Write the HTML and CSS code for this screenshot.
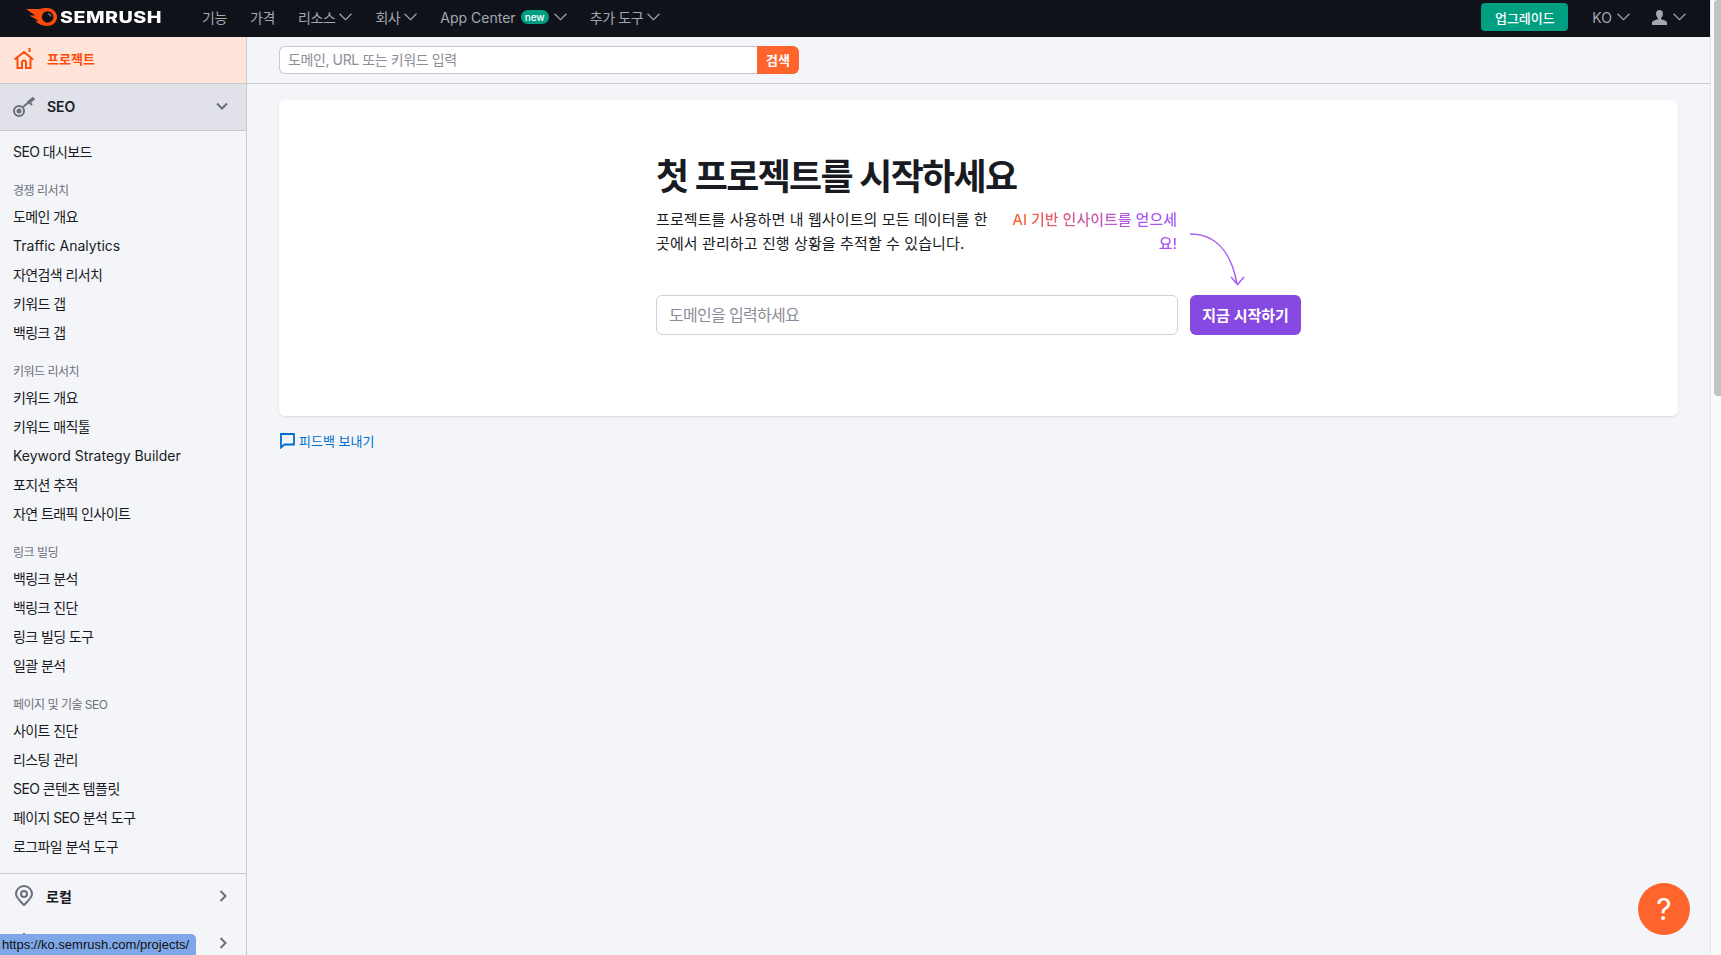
FILE: index.html
```html
<!DOCTYPE html>
<html lang="ko">
<head>
<meta charset="utf-8">
<title>프로젝트 - Semrush</title>
<link rel="stylesheet" href="styles.css">
</head>
<body>
<div class="page">
  <div class="window">
    <header class="topbar">
      <a class="logo">
        <svg class="logo-icon" width="31" height="18" viewBox="0 0 33 19">
          <path fill="#ff4c0d" d="M0 1h15C17 .4 19.500 0 22.500 0c6 0 10.500 4.300 10.500 9.500S28.500 19 22.500 19c-5.500 0-9.700-2-12.500-5.500h3.500L3.500 8h6.500Z"/>
          <circle cx="23" cy="9.500" r="6.200" fill="#0f1319"/>
          <path d="M23.500 6a3.500 3.500 0 0 1 3 3" fill="none" stroke="#8b8d98" stroke-width="1.200"/>
        </svg>
        <span class="logo-text">SEMRUSH</span>
      </a>
      <nav class="topnav">
        <a class="nav-link">기능</a>
        <a class="nav-link">가격</a>
        <a class="nav-link">리소스 <svg class="caret" viewBox="0 0 12 7"><path d="M.5.5 6 6l5.500-5.500"/></svg></a>
        <a class="nav-link">회사 <svg class="caret" viewBox="0 0 12 7"><path d="M.5.5 6 6l5.500-5.500"/></svg></a>
        <a class="nav-link latin">App Center <span class="badge-new">new</span> <svg class="caret" viewBox="0 0 12 7"><path d="M.5.5 6 6l5.500-5.500"/></svg></a>
        <a class="nav-link">추가 도구 <svg class="caret" viewBox="0 0 12 7"><path d="M.5.5 6 6l5.500-5.500"/></svg></a>
      </nav>
      <div class="topbar-right">
        <a class="btn-upgrade">업그레이드</a>
        <a class="nav-link latin lang">KO <svg class="caret" viewBox="0 0 12 7"><path d="M.5.5 6 6l5.500-5.500"/></svg></a>
        <a class="nav-link user">
          <svg class="user-icon" width="15" height="15" viewBox="0 0 15 15"><path fill="#a4a6b3" d="M7.500 0C9.700 0 11 1.600 11 3.800c0 1.800-.8 3.400-1.900 4.200v1.300c2.400.5 5.400 1.500 5.900 3.200V15H0v-2.500c.5-1.700 3.500-2.700 5.900-3.200V8C4.800 7.200 4 5.600 4 3.800 4 1.600 5.300 0 7.500 0Z"/></svg>
          <svg class="caret" viewBox="0 0 12 7"><path d="M.5.5 6 6l5.500-5.500"/></svg>
        </a>
      </div>
    </header>

    <div class="body-row">
      <aside class="sidebar">
        <a class="side-project">
          <svg class="side-icon" width="22" height="22" viewBox="0 0 22 22" fill="none" stroke="#ff4c0d" stroke-width="2"><path d="M1.500 11.500 11 4l9 7.500M4.500 10v10h4.500v-5.500a2 2 0 0 1 4 0V20h4.500V10"/><path d="M16.500 0v4"/></svg>
          <span>프로젝트</span>
        </a>
        <a class="side-group open">
          <svg class="side-icon" width="24" height="22" viewBox="0 0 24 22" fill="none" stroke="#6c6e79" stroke-width="2"><circle cx="6" cy="16" r="5"/><circle cx="6" cy="16" r="1.500" fill="#6c6e79"/><path d="m10 12 6-5"/><path d="m15 8 6-5" stroke-width="3.500"/><path d="m17 8 2 2" stroke-width="2"/></svg>
          <span class="side-group-name">SEO</span>
          <svg class="group-caret" width="12" height="8" viewBox="0 0 12 8"><path d="m1 1.500 5 5 5-5"/></svg>
        </a>
        <div class="side-menu">
          <a class="side-item first">SEO 대시보드</a>

          <div class="side-label">경쟁 리서치</div>
          <a class="side-item">도메인 개요</a>
          <a class="side-item latin">Traffic Analytics</a>
          <a class="side-item">자연검색 리서치</a>
          <a class="side-item">키워드 갭</a>
          <a class="side-item">백링크 갭</a>

          <div class="side-label">키워드 리서치</div>
          <a class="side-item">키워드 개요</a>
          <a class="side-item">키워드 매직툴</a>
          <a class="side-item latin">Keyword Strategy Builder</a>
          <a class="side-item">포지션 추적</a>
          <a class="side-item">자연 트래픽 인사이트</a>

          <div class="side-label">링크 빌딩</div>
          <a class="side-item">백링크 분석</a>
          <a class="side-item">백링크 진단</a>
          <a class="side-item">링크 빌딩 도구</a>
          <a class="side-item">일괄 분석</a>

          <div class="side-label">페이지 및 기술 SEO</div>
          <a class="side-item">사이트 진단</a>
          <a class="side-item">리스팅 관리</a>
          <a class="side-item">SEO 콘텐츠 템플릿</a>
          <a class="side-item">페이지 SEO 분석 도구</a>
          <a class="side-item">로그파일 분석 도구</a>
        </div>
        <a class="side-group closed">
          <svg class="side-icon" width="18" height="21" viewBox="0 0 18 21" fill="none" stroke="#6c6e79" stroke-width="2"><path d="M9 20C5 16 1 12.500 1 9a8 8 0 0 1 16 0c0 3.500-4 7-8 11Z"/><circle cx="9" cy="9" r="3"/></svg>
          <span class="side-group-name">로컬</span>
          <svg class="group-caret" width="8" height="12" viewBox="0 0 8 12"><path d="m1.500 1 5 5-5 5"/></svg>
        </a>
        <a class="side-group closed">
          <svg class="side-icon" width="18" height="21" viewBox="0 0 18 21" fill="none" stroke="#6c6e79" stroke-width="2"><path d="M9 1v4"/></svg>
          <span class="side-group-name"></span>
          <svg class="group-caret" width="8" height="12" viewBox="0 0 8 12"><path d="m1.500 1 5 5-5 5"/></svg>
        </a>
      </aside>

      <main class="content">
        <div class="search-row">
          <form class="search-form">
            <input class="search-input" type="text" placeholder="도메인, URL 또는 키워드 입력">
            <button class="search-btn" type="button">검색</button>
          </form>
        </div>
        <div class="content-inner">
          <section class="card">
            <div class="hero">
              <h1>첫 프로젝트를 시작하세요</h1>
              <div class="hero-copy">
                <p class="hero-text">프로젝트를 사용하면 내 웹사이트의 모든 데이터를 한 곳에서 관리하고 진행 상황을 추적할 수 있습니다.</p>
                <p class="hero-ai"><span class="ai-gradient">AI 기반 인사이트를 얻으세요!</span></p>
              </div>
              <div class="hero-form">
                <input class="domain-input" type="text" placeholder="도메인을 입력하세요">
                <button class="start-btn" type="button">지금 시작하기</button>
                <svg class="hero-arrow" width="58" height="58" viewBox="0 0 58 58" fill="none" stroke="#a760f5" stroke-width="1.500"><path d="M1 2c24 0 41 16 47 50"/><path d="m42 45 6.500 7.500L55 45"/></svg>
              </div>
            </div>
          </section>
          <a class="feedback">
            <svg width="15" height="16" viewBox="0 0 15 16" fill="none" stroke="#006dca" stroke-width="1.800"><path d="M1 1h13v10.500H4.500L1 14.500Z"/></svg>
            <span>피드백 보내기</span>
          </a>
        </div>
      </main>
    </div>
  </div>
  <div class="scrollbar"><div class="scrollbar-thumb"></div></div>
</div>

<a class="help-btn">?</a>
<div class="status-tip">https://ko.semrush.com/projects/</div>
</body>
</html>
```

FILE: styles.css
```css
:root {
  --color-dark: #0f1319;
  --color-bg: #f4f5f9;
  --color-line: #c9cad1;
  --color-text: #191b23;
  --color-muted: #6c6e79;
  --color-orange: #ff642d;
  --color-green: #009f81;
  --color-purple: #8649e1;
}
* {
  box-sizing: border-box;
}
html, body {
  margin: 0;
  height: 100%;
  overflow: hidden;
}
body {
  font-family: Inter, "Noto Sans CJK KR", sans-serif;
  font-size: 14px;
  color: var(--color-text);
  background: var(--color-bg);
}
a {
  color: inherit;
  text-decoration: none;
}
.page {
  display: flex;
  height: 955px;
}
.window {
  flex: 1;
  min-width: 0;
  display: flex;
  flex-direction: column;
}
.scrollbar {
  width: 11px;
  background: #fafafa;
  border-left: 1px solid #e6e6e6;
  padding-left: 3px;
}
.scrollbar-thumb {
  height: 396px;
  background: #c2c2c2;
  border-radius: 4px 0 0 4px;
}

/* top bar */
.topbar {
  height: 37px;
  flex: none;
  background: var(--color-dark);
  display: flex;
  align-items: center;
  padding: 0 0 3px 26px;
  color: #a4a6b3;
}
.logo {
  display: flex;
  align-items: center;
  gap: 3px;
  width: 176px;
}
.logo-text {
  color: #fff;
  font-weight: 800;
  font-size: 16px;
  letter-spacing: 0.4px;
  transform: scaleX(1.23);
  transform-origin: left center;
}
.topnav {
  display: flex;
  align-items: center;
  gap: 23px;
}
.nav-link {
  display: flex;
  align-items: center;
  gap: 4px;
  font-size: 14px;
  letter-spacing: -0.4px;
  white-space: nowrap;
}
.nav-link.latin {
  letter-spacing: 0;
}
.caret {
  width: 13px;
  height: 8px;
  fill: none;
  stroke: #a4a6b3;
  stroke-width: 1;
}
.badge-new {
  background: var(--color-green);
  color: #fff;
  font-size: 10px;
  line-height: 14px;
  padding: 0 4px;
  border-radius: 7px;
  font-weight: 500;
  margin: 0 1px;
}
.topbar-right {
  margin-left: auto;
  display: flex;
  align-items: center;
  padding-right: 24px;
}
.btn-upgrade {
  background: var(--color-green);
  color: #fff;
  font-size: 13px;
  font-weight: 500;
  height: 28px;
  width: 87px;
  display: flex;
  align-items: center;
  justify-content: center;
  border-radius: 4px;
  margin-right: 24px;
}
.lang {
  gap: 5px;
  margin-right: 22px;
}
.user {
  gap: 6px;
}

/* sidebar */
.body-row {
  flex: 1;
  min-height: 0;
  display: flex;
}
.sidebar {
  width: 247px;
  flex: none;
  border-right: 1px solid var(--color-line);
  overflow: hidden;
}
.side-project {
  height: 47px;
  background: #ffe4d9;
  border-bottom: 1px solid var(--color-line);
  color: #ff4c0d;
  font-weight: 600;
  font-size: 13px;
  display: flex;
  align-items: center;
  padding: 0 0 3px 13px;
}
.side-icon {
  flex: none;
  margin-right: 10px;
}
.side-project .side-icon {
  margin-right: 12px;
}
.side-group {
  height: 47px;
  display: flex;
  align-items: center;
  padding: 0 18px 2px 13px;
  font-weight: 600;
  font-size: 14px;
}
.side-group.open {
  background: #e0e1e9;
  border-bottom: 1px solid var(--color-line);
}
.side-group.closed {
  padding: 0 19px 4px 13px;
}
.side-group.closed .side-icon {
  margin-left: 2px;
  margin-right: 13px;
}
.side-group-name {
  flex: 1;
}
.group-caret {
  fill: none;
  stroke: var(--color-muted);
  stroke-width: 2;
}
.side-menu {
  height: 743px;
  padding: 6px 13px 0;
  border-bottom: 1px solid var(--color-line);
}
.side-item {
  display: block;
  height: 29px;
  line-height: 29px;
  font-size: 14px;
  letter-spacing: -0.6px;
  white-space: nowrap;
}
.side-item.latin {
  letter-spacing: 0;
}
.side-item.first {
  margin-bottom: 1px;
}
.side-label {
  font-size: 12px;
  line-height: 16px;
  color: var(--color-muted);
  letter-spacing: -0.5px;
  margin-top: 17px;
  margin-bottom: 3px;
}

/* content */
.content {
  flex: 1;
  min-width: 0;
  display: flex;
  flex-direction: column;
}
.search-row {
  height: 47px;
  flex: none;
  border-bottom: 1px solid var(--color-line);
  padding: 9px 0 0 32px;
}
.search-form {
  display: flex;
  width: 520px;
  height: 28px;
}
.search-input {
  flex: 1;
  min-width: 0;
  border: 1px solid var(--color-line);
  border-right: none;
  border-radius: 6px 0 0 6px;
  background: #fff;
  padding: 0 8px 2px;
  font: 14px Inter, "Noto Sans CJK KR", sans-serif;
  letter-spacing: -0.4px;
}
.search-input::placeholder,
.domain-input::placeholder {
  color: #8b8d98;
  opacity: 1;
}
.search-btn {
  width: 42px;
  border: none;
  background: var(--color-orange);
  color: #fff;
  font: 600 13px Inter, "Noto Sans CJK KR", sans-serif;
  border-radius: 0 6px 6px 0;
  padding: 0 0 2px;
}
.content-inner {
  padding: 16px 32px 0;
}
.card {
  background: #fff;
  height: 316px;
  border-radius: 6px;
  box-shadow: 0 1px 2px rgba(25, 27, 35, 0.12);
  display: flex;
  justify-content: center;
  padding-top: 52px;
}
.hero {
  width: 645px;
}
h1 {
  margin: 0;
  font-size: 36px;
  line-height: 50px;
  font-weight: 600;
  letter-spacing: -1.7px;
}
.hero-copy {
  display: flex;
  justify-content: space-between;
  margin-top: 6px;
  height: 87px;
}
.hero-copy p {
  margin: 0;
  font-size: 15px;
  line-height: 24px;
}
.hero-text {
  width: 344px;
  letter-spacing: 0.1px;
}
.hero-ai {
  width: 167px;
  margin-right: 124px !important;
  text-align: right;
  font-weight: 500;
}
.ai-gradient {
  background: linear-gradient(90deg, #ff642d 0%, #a855f7 70%, #a855f7 100%);
  -webkit-background-clip: text;
  background-clip: text;
  color: transparent;
}
.hero-form {
  position: relative;
  display: flex;
  gap: 12px;
  height: 40px;
}
.domain-input {
  width: 523px;
  height: 40px;
  border: 1px solid #d1d2d9;
  border-radius: 6px;
  padding: 0 12px;
  font: 16px Inter, "Noto Sans CJK KR", sans-serif;
  letter-spacing: -0.7px;
}
.start-btn {
  width: 111px;
  height: 40px;
  border: none;
  border-radius: 6px;
  background: var(--color-purple);
  color: #fff;
  font: 600 15px Inter, "Noto Sans CJK KR", sans-serif;
  padding: 0 0 2px;
}
.hero-arrow {
  position: absolute;
  left: 533px;
  top: -63px;
}
.feedback {
  display: inline-flex;
  align-items: center;
  gap: 4px;
  margin-top: 15px;
  margin-left: 1px;
  color: #006dca;
  font-size: 13px;
  line-height: 20px;
}

/* overlays */
.help-btn {
  position: fixed;
  left: 1638px;
  top: 883px;
  width: 52px;
  height: 52px;
  border-radius: 50%;
  background: var(--color-orange);
  color: #fff;
  font-size: 30px;
  font-weight: 400;
  line-height: 52px;
  text-align: center;
}
.status-tip {
  position: fixed;
  left: 0;
  top: 934px;
  width: 196px;
  height: 21px;
  background: #7da7e6;
  border-radius: 0 5px 0 0;
  color: #111;
  font-family: "Liberation Sans", Arial, sans-serif;
  font-size: 13px;
  line-height: 22px;
  padding-left: 2px;
  white-space: nowrap;
}
```
